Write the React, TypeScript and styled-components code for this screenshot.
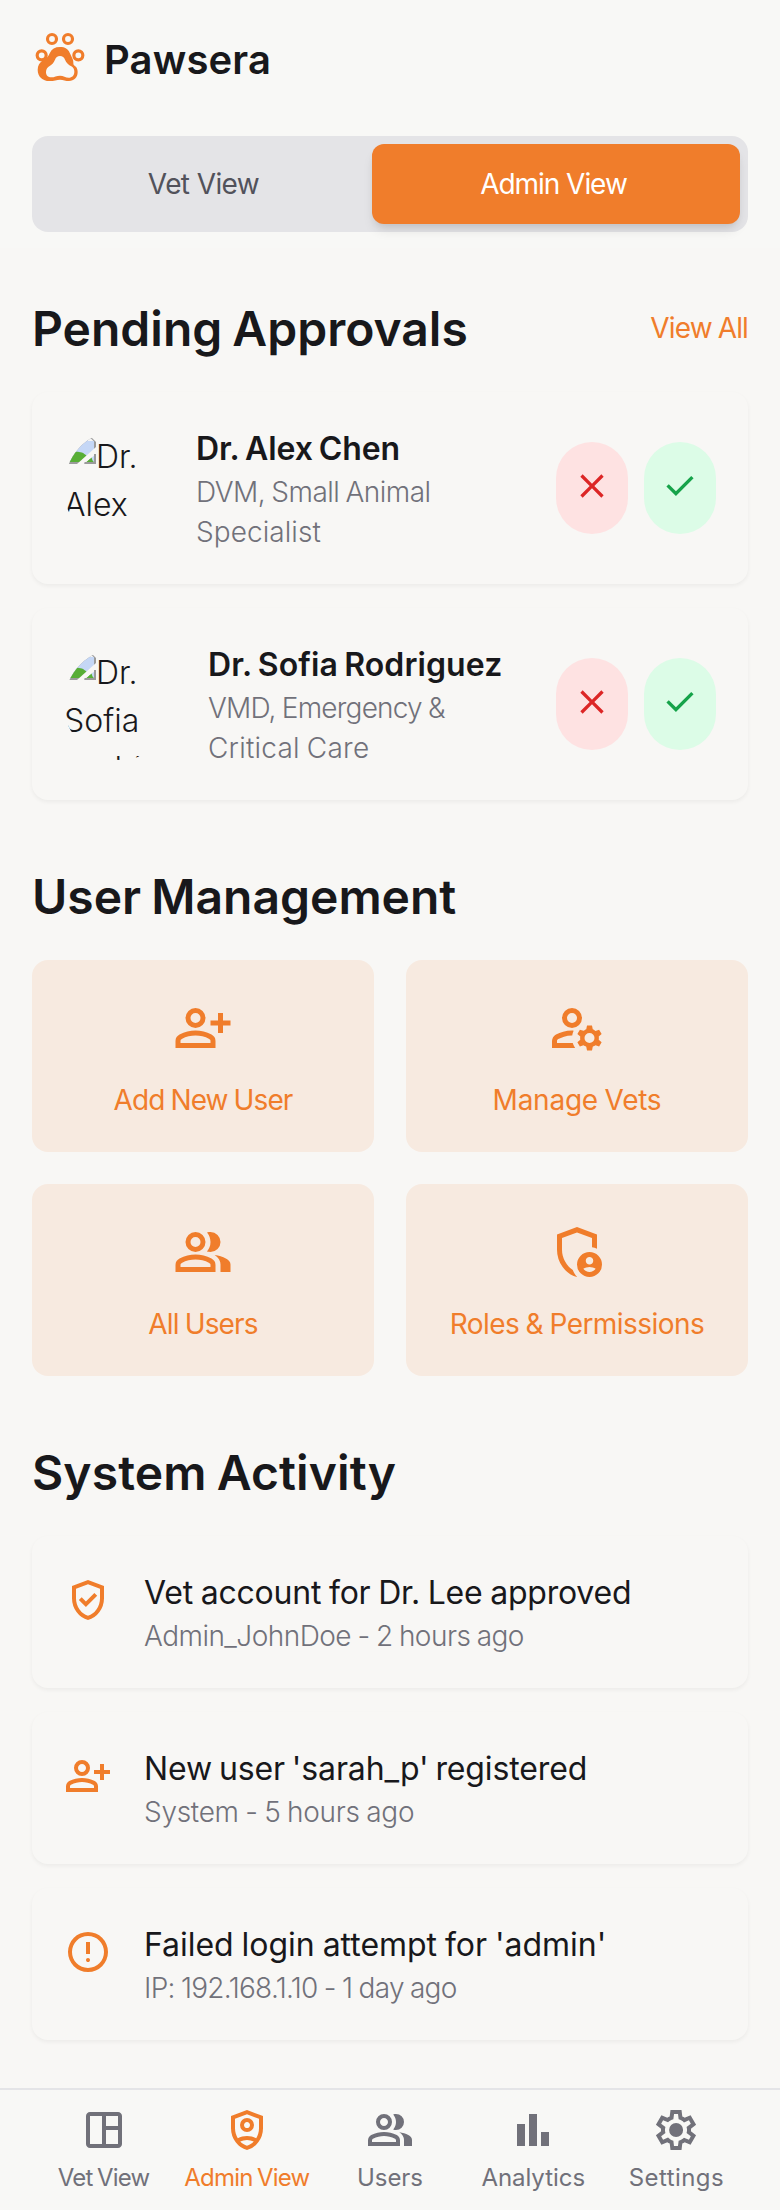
import React from "react";
import styled, { createGlobalStyle } from "styled-components";

const color = {
  page: "#f8f7f5",
  bar: "#f8f8f6",
  ink: "#18181b",
  muted: "#71717a",
  tab: "#52525b",
  line: "#e4e4e7",
  primary: "#f07d2b",
  tint: "#f7eae0",
};

const GlobalStyle = createGlobalStyle`
  *, *::before, *::after { box-sizing: border-box; }
  body {
    margin: 0;
    background: ${color.page};
    color: ${color.ink};
    font-family: Inter, "Liberation Sans", sans-serif;
  }
  h1, h2, h3, p { margin: 0; }
  button { font: inherit; border: 0; padding: 0; cursor: pointer; }
`;

const Page = styled.div`
  display: flex;
  flex-direction: column;
  width: 780px;
  min-height: 2210px;
`;

/* Text run with its own tracking and word gap */
const Run = styled.span<{ $ls?: number; $ws?: number; $block?: boolean }>`
  display: ${(p) => (p.$block ? "block" : "inline")};
  letter-spacing: ${(p) => p.$ls ?? 0}px;
  word-spacing: ${(p) => p.$ws ?? 0}px;
  white-space: nowrap;
`;

const Header = styled.header`
  display: flex;
  flex-direction: column;
  gap: 49px;
  padding: 31px 32px 16px;
  background: ${color.bar};
`;

const Brand = styled.div`
  display: flex;
  align-items: flex-start;
  gap: 16px;
  height: 56px;
`;

const BrandName = styled.h1`
  padding-top: 1px;
  font-size: 40px;
  line-height: 56px;
  font-weight: 600;
`;

const Segmented = styled.div`
  display: flex;
  height: 96px;
  padding: 8px;
  border-radius: 16px;
  background: ${color.line};
`;

const Segment = styled.button<{ $active?: boolean }>`
  flex: 0 0 ${(p) => (p.$active ? 368 : 332)}px;
  padding-right: 5px;
  border-radius: 12px;
  background: ${(p) => (p.$active ? color.primary : "transparent")};
  color: ${(p) => (p.$active ? "#fff" : color.tab)};
  box-shadow: ${(p) =>
    p.$active
      ? "0 8px 12px -2px rgba(0,0,0,.1), 0 4px 8px -4px rgba(0,0,0,.1)"
      : "none"};
  font-size: 28px;
  line-height: 40px;
`;

const Main = styled.main`
  display: flex;
  flex-direction: column;
  gap: 64px;
  padding: 48px 32px;
`;

const Section = styled.section`
  display: flex;
  flex-direction: column;
  gap: 32px;
`;

const SectionHead = styled.div`
  display: flex;
  align-items: center;
  justify-content: space-between;
`;

const SectionTitle = styled.h2`
  height: 64px;
  padding-top: 1px;
  font-size: 48px;
  line-height: 64px;
  font-weight: 600;
`;

const LinkText = styled.a`
  color: ${color.primary};
  font-size: 28px;
  line-height: 40px;
`;

const Stack = styled.div`
  display: flex;
  flex-direction: column;
  gap: 24px;
`;

const Card = styled.article<{ $top?: boolean }>`
  display: flex;
  align-items: ${(p) => (p.$top ? "flex-start" : "center")};
  gap: 32px;
  padding: 32px;
  border-radius: 16px;
  background: ${color.page};
  box-shadow: 0 2px 4px rgba(0, 0, 0, 0.05);
`;

const Avatar = styled.div<{ $width: number }>`
  flex: none;
  width: ${(p) => p.$width}px;
  height: 112px;
  padding-top: 1px;
  overflow: hidden;
  border-radius: 50%;
  font-size: 32px;
  line-height: 48px;
  font-weight: 300;
  svg { display: inline-block; margin-top: -1px; vertical-align: top; }
`;

const CardBody = styled.div`
  flex: 1;
  min-width: 0;
`;

const PersonName = styled.h3`
  height: 48px;
  padding-top: 1px;
  font-size: 32px;
  line-height: 48px;
  font-weight: 600;
`;

const EventTitle = styled(PersonName)`
  font-weight: 400;
`;

const Detail = styled.p`
  color: ${color.muted};
  font-size: 28px;
  line-height: 40px;
  font-weight: 300;
`;

const Actions = styled.div`
  display: flex;
  gap: 16px;
`;

const RoundButton = styled.button<{ $tone: "reject" | "approve" }>`
  display: flex;
  justify-content: center;
  width: 72px;
  height: 92px;
  padding-top: 24px;
  border-radius: 36px;
  background: ${(p) => (p.$tone === "reject" ? "#fee2e2" : "#dcfce7")};
  color: ${(p) => (p.$tone === "reject" ? "#dc2626" : "#16a34a")};
`;

const TileGrid = styled.div`
  display: grid;
  grid-template-columns: 1fr 1fr;
  gap: 32px;
`;

const Tile = styled.button`
  display: flex;
  flex-direction: column;
  align-items: center;
  justify-content: space-between;
  height: 192px;
  padding: 38px 16px 32px;
  border-radius: 16px;
  background: ${color.tint};
  color: ${color.primary};
  font-size: 28px;
  line-height: 40px;
`;

const EventIcon = styled.div`
  flex: none;
  height: 48px;
  margin-top: 8px;
  color: ${color.primary};
`;

const NavBar = styled.nav`
  display: flex;
  height: 122px;
  padding: 16px 32px;
  border-top: 2px solid ${color.line};
  background: ${color.bar};
`;

const NavItem = styled.a<{ $active?: boolean }>`
  display: flex;
  flex: 1;
  flex-direction: column;
  align-items: center;
  gap: 8px;
  color: ${(p) => (p.$active ? color.primary : color.muted)};
  font-size: 24px;
  line-height: 32px;
`;

const paths = {
  close:
    "m256-200-56-56 224-224-224-224 56-56 224 224 224-224 56 56-224 224 224 224-56 56-224-224-224 224Z",
  check: "M382-240 154-468l57-57 171 171 367-367 57 57-424 424Z",
  personAdd:
    "M720-400v-120H600v-80h120v-120h80v120h120v80H800v120h-80Zm-360-80q-66 0-113-47t-47-113q0-66 47-113t113-47q66 0 113 47t47 113q0 66-47 113t-113 47ZM40-160v-112q0-34 17.5-62.5T104-378q62-31 126-46.5T360-440q66 0 130 15.5T616-378q29 15 46.5 43.5T680-272v112H40Zm80-80h480v-32q0-11-5.5-20T580-306q-54-27-109-40.5T360-360q-56 0-111 13.5T140-306q-9 5-14.5 14t-5.5 20v32Zm240-320q33 0 56.5-23.5T440-640q0-33-23.5-56.5T360-720q-33 0-56.5 23.5T280-640q0 33 23.5 56.5T360-560Z",
  group:
    "M40-160v-112q0-34 17.5-62.5T104-378q62-31 126-46.5T360-440q66 0 130 15.5T616-378q29 15 46.5 43.5T680-272v112H40Zm720 0v-120q0-44-24.5-84.5T666-434q51 6 96 20.5t84 35.5q36 20 55 44.5t19 53.5v120H760ZM360-480q-66 0-113-47t-47-113q0-66 47-113t113-47q66 0 113 47t47 113q0 66-47 113t-113 47Zm400-160q0 66-47 113t-113 47q-11 0-28-2.5t-28-5.5q27-32 41.5-71t14.5-81q0-42-14.5-81T544-792q14-5 28-6.5t28-1.5q66 0 113 47t47 113ZM120-240h480v-32q0-11-5.5-20T580-306q-54-27-109-40.5T360-360q-56 0-111 13.5T140-306q-9 5-14.5 14t-5.5 20v32Zm240-320q33 0 56.5-23.5T440-640q0-33-23.5-56.5T360-720q-33 0-56.5 23.5T280-640q0 33 23.5 56.5T360-560Z",
  manage:
    "M400-480q-66 0-113-47t-47-113q0-66 47-113t113-47q66 0 113 47t47 113q0 66-47 113t-113 47ZM80-160v-112q0-33 17-62t47-44q51-26 115-44t141-18h14q6 0 12 2-8 18-13.5 37.5T404-360h-4q-71 0-127.5 18T180-306q-9 5-14.5 14t-5.5 20v32h252q6 21 16 41.5t22 38.5H80Zm560 40-12-60q-12-5-22.5-10.5T584-204l-58 18-40-68 46-40q-2-14-2-26t2-26l-46-40 40-68 58 18q11-8 21.5-13.5T628-460l12-60h80l12 60q12 5 22.5 11t21.5 15l58-20 40 70-46 40q2 12 2 25t-2 25l46 40-40 68-58-18q-11 8-21.5 13.5T732-180l-12 60h-80Zm40-120q33 0 56.5-23.5T760-320q0-33-23.5-56.5T680-400q-33 0-56.5 23.5T600-320q0 33 23.5 56.5T680-240ZM400-560q33 0 56.5-23.5T480-640q0-33-23.5-56.5T400-720q-33 0-56.5 23.5T320-640q0 33 23.5 56.5T400-560Z",
  roles:
    "M680-280q25 0 42.5-17.5T740-340q0-25-17.5-42.5T680-400q-25 0-42.5 17.5T620-340q0 25 17.5 42.5T680-280Zm0 120q31 0 57-14.5t42-38.5q-22-13-47-20t-52-7q-27 0-52 7t-47 20q16 24 42 38.5t57 14.5ZM480-80q-139-35-229.5-159.5T160-516v-244l320-120 320 120v227q-19-8-39-14.5t-41-9.5v-147l-240-90-240 90v188q0 47 12.5 94t35 89.5Q310-290 342-254t71 60q11 32 29 61t41 52q-1 0-1.5.5t-1.5.5Zm200 0q-83 0-141.5-58.5T480-280q0-83 58.5-141.5T680-480q83 0 141.5 58.5T880-280q0 83-58.5 141.5T680-80Z",
  verified:
    "m438-338 226-226-57-57-169 169-84-84-57 57 141 141Zm42 258q-139-35-229.5-159.5T160-516v-244l320-120 320 120v244q0 152-90.5 276.5T480-80Zm0-84q104-33 172-132t68-220v-189l-240-90-240 90v189q0 121 68 220t172 132Z",
  error:
    "M480-280q17 0 28.5-11.5T520-320q0-17-11.5-28.5T480-360q-17 0-28.5 11.5T440-320q0 17 11.5 28.5T480-280Zm-40-160h80v-240h-80v240Zm40 360q-83 0-156-31.5T197-197q-54-54-85.5-127T80-480q0-83 31.5-156T197-763q54-54 127-85.5T480-880q83 0 156 31.5T763-763q54 54 85.5 127T880-480q0 83-31.5 156T763-197q-54 54-127 85.5T480-80Zm0-80q134 0 227-93t93-227q0-134-93-227t-227-93q-134 0-227 93t-93 227q0 134 93 227t227 93Z",
  dashboard:
    "M200-120q-33 0-56.5-23.5T120-200v-560q0-33 23.5-56.5T200-840h560q33 0 56.5 23.5T840-760v560q0 33-23.5 56.5T760-120H200Zm0-80h240v-560H200v560Zm320 0h240v-280H520v280Zm0-360h240v-200H520v200Z",
  shieldPerson:
    "M480-440q-58 0-99-41t-41-99q0-58 41-99t99-41q58 0 99 41t41 99q0 58-41 99t-99 41Zm0-80q25 0 42.5-17.5T540-580q0-25-17.5-42.5T480-640q-25 0-42.5 17.5T420-580q0 25 17.5 42.5T480-520Zm0 440q-139-35-229.5-159.5T160-516v-244l320-120 320 120v244q0 152-90.5 276.5T480-80Zm0-715-240 90v189q0 54 15 105t41 96q42-21 88-33t96-12q50 0 96 12t88 33q26-45 41-96t15-105v-189l-240-90Zm0 515q-36 0-70 8t-65 22q29 30 63 52t72 34q38-12 72-34t63-52q-31-14-65-22t-70-8Z",
  chart: "M640-160v-280h160v280H640Zm-240 0v-640h160v640H400Zm-240 0v-440h160v440H160Z",
  settings:
    "m370-80-16-128q-13-5-24.5-12T307-235l-119 50L78-375l103-78q-1-7-1-13.5v-27q0-6.5 1-13.5L78-585l110-190 119 50q11-8 23-15t24-12l16-128h220l16 128q13 5 24.5 12t22.5 15l119-50 110 190-103 78q1 7 1 13.5v27q0 6.5-2 13.5l103 78-110 190-118-50q-11 8-23 15t-24 12L590-80H370Zm70-80h79l14-106q31-8 57.5-23.5T639-327l99 41 39-68-86-65q5-14 7-29.5t2-31.5q0-16-2-31.5t-7-29.5l86-65-39-68-99 42q-22-23-48.5-38.5T533-694l-13-106h-79l-14 106q-31 8-57.5 23.5T321-633l-99-41-39 68 86 64q-5 15-7 30t-2 32q0 16 2 31t7 30l-86 65 39 68 99-42q22 23 48.5 38.5T427-266l13 106Zm42-180q58 0 99-41t41-99q0-58-41-99t-99-41q-59 0-99.5 41T342-480q0 58 40.5 99t99.5 41Z",
};

type IconName = keyof typeof paths;

function Icon({ name, size }: { name: IconName; size: number }) {
  return (
    <svg width={size} height={size} viewBox="0 -960 960 960" fill="currentColor" aria-hidden>
      <path d={paths[name]} />
    </svg>
  );
}

function PawLogo() {
  return (
    <svg width="56" height="56" viewBox="96 93 168 168" fill="none" aria-hidden>
      <g stroke={color.primary} strokeWidth="9.5">
        <circle cx="156" cy="117" r="13.5" />
        <circle cx="204" cy="117" r="13.5" />
        <circle cx="125" cy="166" r="13.5" />
        <circle cx="235" cy="166" r="13.5" />
      </g>
      <path
        fill={color.primary}
        fillRule="evenodd"
        d="M180 141C195 141 204 147 209 158C213 167 217 173 219 180C221 187 219 193 222 196C229 200 233 206 233 216C233 232 222 243 207 243C197 243 190 239 180 239C170 239 163 243 148 243C128 243 113 230 113 209C113 196 119 187 128 182C137 177 145 170 150 158C155 147 165 141 180 141Z
           M180 168C188 168 192 172 195 179C199 190 206 194 214 199C220 203 223 208 223 215C223 226 216 233 206 233C197 233 190 227 180 227C170 227 163 232 154 232C144 232 138 226 138 216C138 207 143 202 149 198C157 193 161 188 165 179C168 172 172 168 180 168Z"
      />
    </svg>
  );
}

function MissingImage() {
  return (
    <svg width="32" height="32" viewBox="0 0 32 32" aria-hidden>
      <path fill="#9b9b9b" d="M0 0H22L32 10V32H0Z" />
      <path fill="#c5d7f6" d="M2 2H21L24 5V9H30V30H2Z" />
      <path fill="#f4f4f4" d="M24 3.5V9H29.5Z" />
      <path fill="#58ae36" d="M2 30V27C6 21 11 19 15 20C19 20 22 23 25 26L30 30Z" />
      <path fill={color.page} d="M13 32L32 15V22L20 32Z" />
      <path fill="#9b9b9b" d="M20.5 32V30H30V22H32V32Z" />
      <path fill="#58ae36" d="M23 30L27.500 25.500L29 30Z" />
    </svg>
  );
}

type Line = { text: string; ls?: number; ws?: number };

const approvals: { alt: string; width: number; name: Line; lines: Line[] }[] = [
  {
    alt: "Dr. Alex Chen",
    width: 100,
    name: { text: "Dr. Alex Chen", ls: -0.1, ws: -2 },
    lines: [
      { text: "DVM, Small Animal", ls: -0.54, ws: -1 },
      { text: "Specialist", ls: 0.07 },
    ],
  },
  {
    alt: "Dr. Sofia Rodriguez",
    width: 112,
    name: { text: "Dr. Sofia Rodriguez", ls: 0.1, ws: -2 },
    lines: [
      { text: "VMD, Emergency &", ls: -0.79, ws: -1 },
      { text: "Critical Care", ls: 0.22, ws: -1 },
    ],
  },
];

const tiles: { icon: IconName; label: Line }[] = [
  { icon: "personAdd", label: { text: "Add New User", ls: -0.89, ws: -1 } },
  { icon: "manage", label: { text: "Manage Vets", ls: -0.25, ws: -1 } },
  { icon: "group", label: { text: "All Users", ls: -0.86, ws: -1 } },
  { icon: "roles", label: { text: "Roles & Permissions", ls: -0.54, ws: -1 } },
];

const events: { icon: IconName; title: Line; detail: Line }[] = [
  {
    icon: "verified",
    title: { text: "Vet account for Dr. Lee approved", ls: -0.22, ws: -1 },
    detail: { text: "Admin_JohnDoe - 2 hours ago", ls: -0.53, ws: -1 },
  },
  {
    icon: "personAdd",
    title: { text: "New user 'sarah_p' registered", ls: -0.12, ws: -2 },
    detail: { text: "System - 5 hours ago", ls: -0.3, ws: -1 },
  },
  {
    icon: "error",
    title: { text: "Failed login attempt for 'admin'", ls: -0.03, ws: -1 },
    detail: { text: "IP: 192.168.1.10 - 1 day ago", ls: -0.7, ws: -1 },
  },
];

const navItems: { icon: IconName; label: Line; active?: boolean }[] = [
  { icon: "dashboard", label: { text: "Vet View", ls: -0.8, ws: -1.5 } },
  { icon: "shieldPerson", label: { text: "Admin View", ls: -0.8, ws: -1.5 }, active: true },
  { icon: "group", label: { text: "Users", ls: -0.06 } },
  { icon: "chart", label: { text: "Analytics", ls: -0.04 } },
  { icon: "settings", label: { text: "Settings", ls: 0.44 } },
];

function Copy({ line, block }: { line: Line; block?: boolean }) {
  return (
    <Run $ls={line.ls} $ws={line.ws} $block={block}>
      {line.text}
    </Run>
  );
}

export default function App() {
  return (
    <Page>
      <GlobalStyle />
      <Header>
        <Brand>
          <PawLogo />
          <BrandName>
            <Copy line={{ text: "Pawsera", ls: 0.15 }} />
          </BrandName>
        </Brand>
        <Segmented>
          <Segment>
            <Copy line={{ text: "Vet View", ls: -0.6 }} />
          </Segment>
          <Segment $active>
            <Copy line={{ text: "Admin View", ls: -1.05 }} />
          </Segment>
        </Segmented>
      </Header>

      <Main>
        <Section>
          <SectionHead>
            <SectionTitle>
              <Copy line={{ text: "Pending Approvals", ws: -2 }} />
            </SectionTitle>
            <LinkText>
              <Copy line={{ text: "View All", ls: -0.87, ws: -1 }} />
            </LinkText>
          </SectionHead>
          <Stack>
            {approvals.map((a) => (
              <Card key={a.alt}>
                <Avatar $width={a.width}>
                  <MissingImage />
                  {a.alt}
                </Avatar>
                <CardBody>
                  <PersonName>
                    <Copy line={a.name} />
                  </PersonName>
                  <Detail>
                    {a.lines.map((l) => (
                      <Copy key={l.text} line={l} block />
                    ))}
                  </Detail>
                </CardBody>
                <Actions>
                  <RoundButton $tone="reject" aria-label="Reject">
                    <Icon name="close" size={40} />
                  </RoundButton>
                  <RoundButton $tone="approve" aria-label="Approve">
                    <Icon name="check" size={40} />
                  </RoundButton>
                </Actions>
              </Card>
            ))}
          </Stack>
        </Section>

        <Section>
          <SectionTitle>
            <Copy line={{ text: "User Management", ws: -2 }} />
          </SectionTitle>
          <TileGrid>
            {tiles.map((t) => (
              <Tile key={t.label.text}>
                <Icon name={t.icon} size={60} />
                <Copy line={t.label} />
              </Tile>
            ))}
          </TileGrid>
        </Section>

        <Section>
          <SectionTitle>
            <Copy line={{ text: "System Activity", ls: 0.1, ws: -2 }} />
          </SectionTitle>
          <Stack>
            {events.map((e) => (
              <Card key={e.title.text} $top>
                <EventIcon>
                  <Icon name={e.icon} size={48} />
                </EventIcon>
                <CardBody>
                  <EventTitle>
                    <Copy line={e.title} />
                  </EventTitle>
                  <Detail>
                    <Copy line={e.detail} />
                  </Detail>
                </CardBody>
              </Card>
            ))}
          </Stack>
        </Section>
      </Main>

      <NavBar>
        {navItems.map((n) => (
          <NavItem key={n.label.text} $active={n.active}>
            <Icon name={n.icon} size={48} />
            <Copy line={n.label} />
          </NavItem>
        ))}
      </NavBar>
    </Page>
  );
}
